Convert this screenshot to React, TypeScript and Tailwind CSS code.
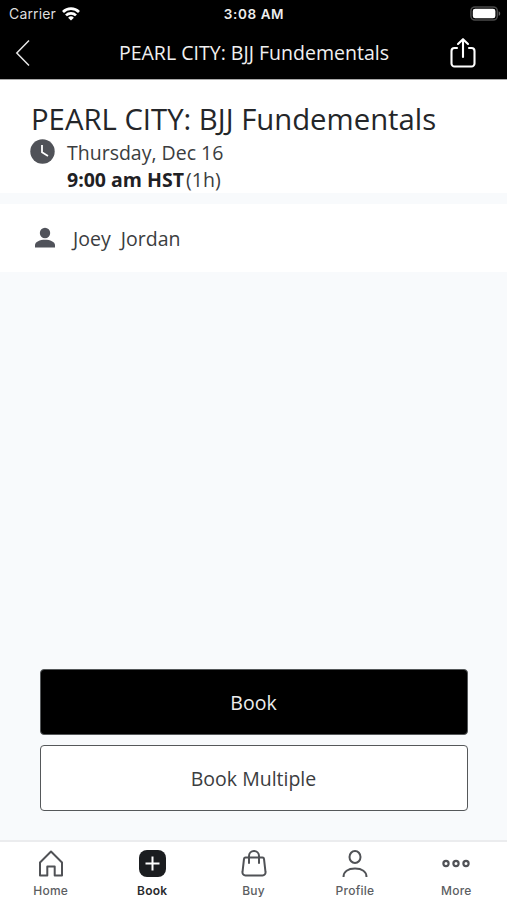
import type { ReactNode } from "react";

const openSans = "font-['Open_Sans','Noto_Sans',sans-serif]";
const inter = "font-['Inter','Liberation_Sans',sans-serif]";

function StatusBar() {
  return (
    <div className={`${inter} grid h-[27px] grid-cols-3 items-center pr-[6px] pl-[9px] text-[13.5px] leading-none`}>
      <div className="flex items-center gap-[6px] text-[#dedede]">
        <span className="text-[14px] tracking-[0.15px]">Carrier</span>
        <svg width="18" height="14" viewBox="0 0 18 14" fill="none" stroke="#fff" strokeWidth="2.7">
          <path d="M1 5a11.4 11.4 0 0 1 16 0" />
          <path d="M4 8.4a7.1 7.1 0 0 1 10 0" />
          <path d="M9 13.6 6.1 10.7a4.1 4.1 0 0 1 5.8 0Z" fill="#fff" stroke="none" />
        </svg>
      </div>
      <span className="pt-[2px] pr-[2px] text-center font-semibold tracking-[0.6px] whitespace-nowrap text-[#ededed]">3:08 AM</span>
      <svg className="justify-self-end" width="31" height="15" viewBox="0 0 31 15">
        <rect x="0.9" y="0.9" width="26.4" height="13.2" rx="4" fill="none" stroke="#4a4a4a" strokeWidth="1.5" />
        <rect x="2.8" y="2.7" width="22.6" height="9.6" rx="2.4" fill="#fff" />
        <path d="M28.7 5.2c2 .8 2 3.8 0 4.6Z" fill="#666" />
      </svg>
    </div>
  );
}

function NavBar() {
  return (
    <div className="flex h-[52px] items-center justify-between pr-[30px] pb-px pl-[15px]">
      <svg width="30" height="28" viewBox="0 0 30 28" fill="none" stroke="#e6e6e6" strokeWidth="1.5">
        <path d="M14 1.5 1.8 14 14 26.5" />
      </svg>
      <span className="ml-[14px] text-[19.55px] whitespace-nowrap text-[#f0f0f0]">PEARL CITY: BJJ Fundementals</span>
      <svg width="28" height="32" viewBox="0 0 28 32" fill="none" stroke="#fff" strokeWidth="2.1" strokeLinecap="round" strokeLinejoin="round">
        <path d="M8 11H5.5a3 3 0 0 0-3 3v12.5a3 3 0 0 0 3 3h17a3 3 0 0 0 3-3V14a3 3 0 0 0-3-3H20" />
        <path d="M14 20V2.5M9 7l5-4.8L19 7" />
      </svg>
    </div>
  );
}

function Tab({ label, active = false, children }: { label: string; active?: boolean; children: ReactNode }) {
  return (
    <div className="flex flex-1 flex-col items-center">
      <svg width="30" height="30" viewBox="0 0 30 30" fill="none" stroke="#505256" strokeWidth="2">
        {children}
      </svg>
      <span
        className={
          active
            ? "mt-[5px] text-[12px] leading-[15px] font-semibold tracking-[0.2px] text-[#292b2e]"
            : "mt-[5px] text-[12px] leading-[15px] font-medium tracking-[0.25px] text-[#5c5e62]"
        }
      >
        {label}
      </span>
    </div>
  );
}

export default function App() {
  return (
    <div className={`${openSans} flex h-[900px] w-[507px] flex-col overflow-hidden bg-[#f8fafc] text-[#242629]`}>
      <header className="bg-black">
        <StatusBar />
        <NavBar />
      </header>
      <section className="h-[114px] border-t border-[#a9a9a9] bg-white pt-[21px] pl-[30px]">
        <h1 className="pl-px text-[29.3px] leading-[36px] whitespace-nowrap">PEARL CITY: BJJ Fundementals</h1>
        <div className="flex gap-[12px]">
          <svg className="mt-[2px]" width="25" height="25" viewBox="0 0 25 25">
            <circle cx="12.5" cy="12.5" r="12.2" fill="#505258" />
            <path d="M12 6v7.3l6 3.6" fill="none" stroke="#fff" strokeWidth="1.8" />
          </svg>
          <div className="pt-[2px] text-[19.5px] leading-[27px] text-[#3b3d40]">
            <p>Thursday, Dec 16</p>
            <p className="flex gap-[2px]">
              <strong className="font-bold text-[#1f2124]">9:00 am HST</strong>
              <span>(1h)</span>
            </p>
          </div>
        </div>
      </section>
      <section className="mt-[11px] flex h-[68px] items-center gap-[17px] bg-white pl-[34px]">
        <svg width="22" height="22" viewBox="0 0 22 22" fill="#50525a">
          <circle cx="11" cy="6" r="5.2" />
          <path d="M1 20.5v-2.4c0-3.3 5-5.3 10-5.3s10 2 10 5.3v2.4Z" />
        </svg>
        <span className="pt-px text-[19.5px] whitespace-pre text-[#3b3d40]">Joey  Jordan</span>
      </section>
      <main className="flex flex-1 flex-col justify-end gap-[10px] pr-[39px] pb-[29px] pl-[40px]">
        <button className="h-[66px] rounded-[4px] border border-[#55585a] bg-black pt-[2px] pr-px text-[19.5px] text-[#ededed]">Book</button>
        <button className="h-[66px] rounded-[4px] border border-[#55585a] bg-white pt-[2px] pr-px text-[19.5px] text-[#3b3d40]">Book Multiple</button>
      </main>
      <nav className={`${inter} flex h-[60px] border-t-2 border-[#ebecee] bg-white pt-[6px]`}>
        <Tab label="Home">
          <path d="M4 27.5v-13L15 3.5l11 11v13h-7.3v-9h-7.4v9Z" strokeLinejoin="round" />
        </Tab>
        <Tab label="Book" active>
          <rect x="2" y="2" width="27" height="27" rx="8" fill="#1b1d20" stroke="none" />
          <path d="M8.500 15.500h14M15.500 8.500v14" stroke="#fff" />
        </Tab>
        <Tab label="Buy">
          <path d="M6.500 9.500h17a1.500 1.500 0 0 1 1.500 1.300l1.500 13.200a3 3 0 0 1-3 3.500h-17a3 3 0 0 1-3-3.500L5 10.800A1.500 1.500 0 0 1 6.500 9.500Z" />
          <path d="M10 15V8a5 5 0 0 1 10 0v7" strokeLinecap="round" />
        </Tab>
        <Tab label="Profile">
          <ellipse cx="15" cy="9" rx="5.5" ry="6" />
          <path d="M3.5 29c0-5.5 4.5-8.5 11.5-8.5s11.5 3 11.5 8.5" />
        </Tab>
        <Tab label="More">
          <circle cx="5" cy="15.5" r="2.6" strokeWidth="2.2" />
          <circle cx="15" cy="15.5" r="2.6" strokeWidth="2.2" />
          <circle cx="25" cy="15.5" r="2.6" strokeWidth="2.2" />
        </Tab>
      </nav>
    </div>
  );
}
